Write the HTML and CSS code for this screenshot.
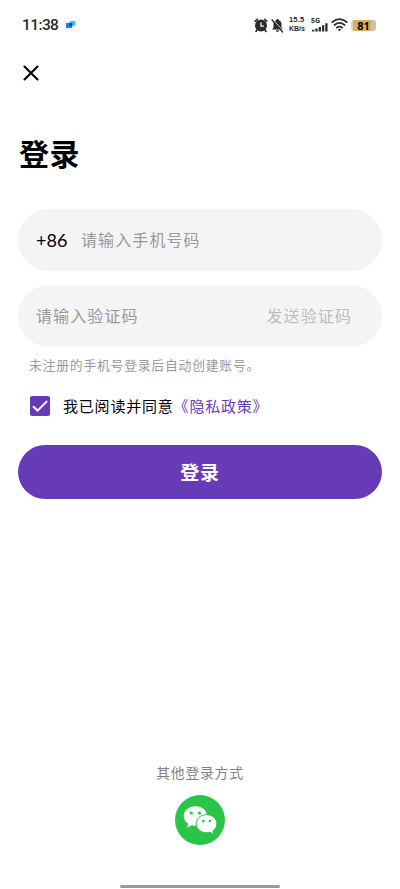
FILE: index.html
```html
<!DOCTYPE html>
<html lang="zh-CN">
<head>
<meta charset="utf-8">
<meta name="viewport" content="width=device-width, initial-scale=1">
<title>登录</title>
<link rel="stylesheet" href="styles.css">
</head>
<body>
<div class="screen">
  <header class="status">
    <span class="time">11:38</span>
    <svg class="app" width="14" height="14" viewBox="0 0 14 14"><rect x=".5" y=".5" width="13" height="13" rx="3" fill="#fff" stroke="#f5f5f5"/><path d="M5.500 3h5.800v4.800H5.500z" fill="#08dfdc"/><path d="M2 5h6.200v5H3l-1 .7z" fill="#1683fa"/><path d="M5.500 5h2.700v2.800H5.500z" fill="#063b9b"/></svg>
    <div class="indicators">
      <svg class="alarm" width="14" height="15" viewBox="0 0 14 15"><circle cx="7" cy="7.500" r="6" fill="#2b2b2b"/><path d="M1.200 3.200 3.400 1.400M12.800 3.200 10.600 1.400M3 12l-1 1.400M11 12l1 1.400" stroke="#2b2b2b" stroke-width="1.700" stroke-linecap="round"/><path d="M7 4.500v3.600h2.800" fill="none" stroke="#fff" stroke-width="1.300"/></svg>
      <svg class="bell" width="13" height="15" viewBox="0 0 13 15"><path d="M6.500 1c.8 0 1.200.5 1.200 1.200 2 .6 2.800 2 2.800 4v3.300l1.500 2H1l1.500-2V6.200c0-2 .8-3.400 2.800-4C5.300 1.500 5.700 1 6.500 1zM5 12.300h3c0 2-3 2-3 0z" fill="#2b2b2b"/><path d="m1.500 1 11 12.500" stroke="#fff" stroke-width="1"/><path d="m.7 1.500 11.300 13" stroke="#2b2b2b" stroke-width="1.400"/></svg>
      <div class="speed"><span class="rate">15.5</span><span>KB/s</span></div>
      <div class="signal"><span>5G</span><svg width="17" height="9" viewBox="0 0 17 9"><path d="M2.200 8.500V6.700M5.500 8.500V5.500M8.800 8.500V4M12.100 8.500V2.200M15.400 8.500V.2" stroke="#2b2b2b" stroke-width="2.300"/></svg></div>
      <svg class="wifi" width="17" height="14" viewBox="0 0 17 14"><g fill="none" stroke="#2b2b2b" stroke-width="1.700" stroke-linecap="round"><path d="M1.200 4.200q7.300-6.200 14.600 0M3.500 7q5-4.200 10 0M5.800 9.700q2.700-2.200 5.400 0"/></g><path d="m6.800 11.400 1.700 1.900 1.700-1.900q-1.700-1.200-3.400 0z" fill="#2b2b2b"/></svg>
      <div class="battery">81</div>
    </div>
  </header>
  <svg class="close" width="16" height="16" viewBox="0 0 16 16"><path d="M1.500 1.500 14.500 14.500M14.500 1.500 1.500 14.500" stroke="#000" stroke-width="2.100" stroke-linecap="round"/></svg>
  <main class="content">
    <h1 class="title">登录</h1>
    <div class="field"><span class="prefix">+86</span><span class="hint">请输入手机号码</span></div>
    <div class="field"><span class="hint">请输入验证码</span><span class="send">发送验证码</span></div>
    <p class="note">未注册的手机号登录后自动创建账号。</p>
    <div class="agree">
      <svg width="20" height="20" viewBox="0 0 20 20"><rect width="20" height="20" rx="2" fill="#673ab7"/><path d="m3 10.300 4.600 4.300 9.500-9.500" fill="none" stroke="#fff" stroke-width="2"/></svg>
      <span class="terms">我已阅读并同意<a class="policy">《隐私政策》</a></span>
    </div>
    <button class="submit">登录</button>
  </main>
  <footer class="other">
    <span class="other-label">其他登录方式</span>
    <svg class="wechat" width="50" height="50" viewBox="0 0 50 50"><circle cx="25" cy="25" r="25" fill="#2ac448"/><path d="M20.500 11.200c-6.700 0-11.800 4.300-11.800 9.800 0 3.200 1.700 5.900 4.500 7.700l-1.300 4.100 4.800-2.600c1.200.4 2.500.6 3.800.6 6.800 0 11.500-4.300 11.500-9.800s-4.700-9.800-11.500-9.800z" fill="#fff"/><path d="M31.500 19.700c-5.800 0-10.300 4-10.300 9s4.500 9 10.300 9c1.200 0 2.400-.2 3.500-.5l4 2-1-3.400c2.400-1.700 3.900-4.200 3.900-7.100 0-5-4.500-9-10.400-9z" fill="#fff" stroke="#2ac448" stroke-width="1"/><g fill="#2ac448"><circle cx="16.300" cy="18" r="1.600"/><circle cx="24.500" cy="18" r="1.600"/><circle cx="28.400" cy="26" r="1.300"/><circle cx="34.900" cy="26" r="1.300"/></g></svg>
    <div class="home-bar"></div>
  </footer>
</div>
</body>
</html>
```
FILE: styles.css
```css
* { box-sizing: border-box; }
body {
  margin: 0;
  background: #fff;
  color: #000;
  font-family: "Noto Sans", "Noto Sans CJK SC", sans-serif;
}
.screen {
  display: flex;
  flex-direction: column;
  width: 400px;
  height: 889px;
  overflow: hidden;
}
svg { display: block; flex: none; }
.status {
  display: flex;
  align-items: center;
  height: 50px;
  padding: 0 24px 0 22px;
  color: #2b2b2b;
}
.time { width: 42px; font-family: Roboto, sans-serif; font-size: 15.500px; line-height: 20px; font-weight: 500; letter-spacing: -.6px; white-space: nowrap; }
.indicators { display: flex; align-items: center; margin-left: auto; }
.bell { margin-left: 3px; }
.speed {
  display: flex;
  flex-direction: column;
  width: 18px;
  margin-left: 5px;
  font-family: "Liberation Sans", sans-serif;
  font-size: 7px;
  line-height: 8px;
  font-weight: 700;
  white-space: nowrap;
}
.speed span { height: 8px; }
.speed .rate { height: 9px; margin-top: -2px; font-size: 7.500px; letter-spacing: .2px; }
.signal { width: 17px; margin-left: 4px; font-size: 7px; font-weight: 700; line-height: 6px; }
.signal span { display: block; height: 5px; }
.wifi { margin-left: 3px; }
.battery {
  width: 25px;
  height: 11px;
  margin-left: 3px;
  border-radius: 3px;
  background: linear-gradient(90deg, #d9d4c8 0 8%, #d5b062 8% 82%, #c9c2b2 82%);
  color: #000;
  font-size: 11px;
  font-weight: 700;
  line-height: 11px;
  text-align: center;
}
.close { margin: 15px 0 0 23px; }
.content { display: flex; flex-direction: column; padding: 50px 18px 0; }
.title { margin: 0 0 33px 1px; font-size: 30px; line-height: 45px; letter-spacing: .6px; }
.field {
  display: flex;
  align-items: center;
  height: 62px;
  margin-bottom: 13.500px;
  padding: 0 30px 2px 18px;
  border-radius: 31px;
  background: #f4f4f4;
  font-size: 16px;
  letter-spacing: 1.100px;
}
.prefix { width: 45px; padding-top: 2px; font-family: Lato, sans-serif; font-size: 18px; letter-spacing: 0; }
.hint { color: #999; }
.send { margin-left: auto; color: #bdbdbd; }
.note { margin: -5px 0 0 11px; color: #999; font-size: 12.800px; line-height: 20px; letter-spacing: .8px; white-space: nowrap; }
.agree { display: flex; align-items: center; height: 24px; margin: 18.500px 0 27.500px 12px; }
.terms { margin-left: 13px; padding-bottom: 1px; font-size: 15px; letter-spacing: .8px; white-space: nowrap; }
.policy { color: #673ab7; }
.submit {
  height: 54px;
  padding: 0 0 1px;
  border: 0;
  border-radius: 27px;
  background: #673ab7;
  color: #fff;
  font: inherit;
  font-size: 19px;
  font-weight: 700;
  letter-spacing: .7px;
}
.other { display: flex; flex-direction: column; align-items: center; margin-top: auto; }
.other-label { color: #808080; font-size: 13.800px; line-height: 20px; letter-spacing: .8px; }
.wechat { margin-top: 12px; }
.home-bar { width: 160px; height: 3px; margin: 40px 0 1px; border-radius: 2px; background: #999; }
```
